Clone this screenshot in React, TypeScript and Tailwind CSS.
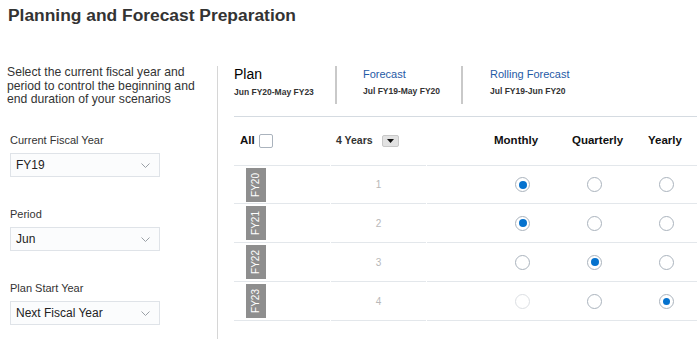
import React from "react";

const Chevron = () => (
  <svg width="9" height="5" viewBox="0 0 9 5" className="shrink-0">
    <polyline points="0.5,0.5 4.5,4.5 8.5,0.5" fill="none" stroke="#9aa0a6" strokeWidth="1" />
  </svg>
);

const Select = ({ value }: { value: string }) => (
  <div className="ml-[10px] w-[150px] h-[24px] flex items-center justify-between pl-[5px] pr-[9px] bg-[#fbfcfd] border border-[#dfe3e8] text-[12px] text-[#222]">
    <span>{value}</span>
    <Chevron />
  </div>
);

const Field = ({ label, value }: { label: string; value: string }) => (
  <div className="flex flex-col">
    <div className="pl-[10px] h-[14px] leading-[14px] text-[11px] text-[#333] mb-[6px]">{label}</div>
    <Select value={value} />
  </div>
);

const Radio = ({ state, dot = 7 }: { state: "on" | "off" | "disabled"; dot?: number }) => (
  <div
    className={
      "w-[15px] h-[15px] rounded-full border flex items-center justify-center bg-white " +
      (state === "disabled" ? "border-[#dcdfe3]" : "border-[#aab3bd]")
    }
  >
    {state === "on" && (
      <div className={dot === 7 ? "w-[8px] h-[8px] rounded-full bg-[#0572ce]" : "w-[7px] h-[7px] rounded-full bg-[#0572ce]"} />
    )}
  </div>
);

type Row = { fy: string; n: string; r: ["on" | "off" | "disabled", "on" | "off" | "disabled", "on" | "off" | "disabled"] };

const rows: Row[] = [
  { fy: "FY20", n: "1", r: ["on", "off", "off"] },
  { fy: "FY21", n: "2", r: ["on", "off", "off"] },
  { fy: "FY22", n: "3", r: ["off", "on", "off"] },
  { fy: "FY23", n: "4", r: ["disabled", "off", "on"] },
];

export default function App() {
  return (
    <div
      className="w-[697px] h-[339px] overflow-hidden bg-white text-[#333]"
      style={{ fontFamily: '"Liberation Sans", Arial, sans-serif' }}
    >
      <div className="h-[66px] pl-[8px] pt-[4px]">
        <h1 className="text-[17.4px] leading-[22px] font-bold text-[#333]">Planning and Forecast Preparation</h1>
      </div>
      <div className="flex h-[273px]">
        {/* Left column */}
        <div className="w-[218px] shrink-0 border-r border-[#d6d6d6] flex flex-col">
          <div className="h-[67px] pl-[7px] pt-[0px] text-[12.2px] leading-[13.5px] text-[#333]">
            Select the current fiscal year and
            <br />
            period to control the beginning and
            <br />
            end duration of your scenarios
          </div>
          <div className="flex flex-col gap-[30px]">
            <Field label="Current Fiscal Year" value="FY19" />
            <Field label="Period" value="Jun" />
            <Field label="Plan Start Year" value="Next Fiscal Year" />
          </div>
        </div>

        {/* Right content */}
        <div className="flex-1 pl-[16px] flex flex-col">
          {/* Tabs */}
          <div className="flex h-[38px]">
            <div className="w-[103px] border-r-2 border-[#c9c9c9] flex flex-col">
              <div className="text-[14px] leading-[16px] text-black">Plan</div>
              <div className="mt-[5px] text-[8.5px] leading-[11px] font-bold text-[#333]">Jun FY20-May FY23</div>
            </div>
            <div className="w-[126px] pl-[26px] border-r-2 border-[#c9c9c9] flex flex-col">
              <div className="text-[11px] leading-[16px] text-[#1f5aa6]">Forecast</div>
              <div className="mt-[4px] text-[8.5px] leading-[11px] font-bold text-[#333]">Jul FY19-May FY20</div>
            </div>
            <div className="pl-[27px] flex flex-col">
              <div className="text-[11px] leading-[16px] text-[#1f5aa6]">Rolling Forecast</div>
              <div className="mt-[4px] text-[8.5px] leading-[11px] font-bold text-[#333]">Jul FY19-Jun FY20</div>
            </div>
          </div>
          <div className="mt-[12px] h-[1px] bg-[#d5dbe1]" />

          {/* Header row */}
          <div className="h-[48px] flex items-center text-[#111]">
            <div className="w-[102px] pl-[6px] flex items-center">
              <span className="text-[11.5px] font-bold">All</span>
              <span className="ml-[4px] w-[14px] h-[14px] border border-[#aab3bd] rounded-[2px] bg-white" />
            </div>
            <div className="w-[158px] flex items-center">
              <span className="text-[10.5px] font-bold text-[#333]">4 Years</span>
              <span className="ml-[9px] w-[17px] h-[12px] bg-[#e2e2e2] border border-[#c8c8c8] rounded-[2px] flex items-center justify-center">
                <svg width="7" height="4" viewBox="0 0 7 4">
                  <polygon points="0,0 7,0 3.5,4" fill="#111" />
                </svg>
              </span>
            </div>
            <div className="w-[78px] text-[11.5px] font-bold">Monthly</div>
            <div className="w-[76px] text-[11.5px] font-bold">Quarterly</div>
            <div className="text-[11.5px] font-bold">Yearly</div>
          </div>

          {/* Table */}
          <div className="flex flex-col">
            {rows.map((row, i) => (
              <div key={row.fy} className="grid grid-cols-[96px_95px_1fr] gap-x-[1px]">
                <div className={"h-[39px] border-b border-[#e3e7eb] pl-[12px] flex items-center " + (i === 0 ? "border-t" : "")}>
                  <div className="w-[20px] h-[34px] bg-[#8e8e8e] flex items-center justify-center">
                    <span className="-rotate-90 text-white text-[10px] leading-none whitespace-nowrap">{row.fy}</span>
                  </div>
                </div>
                <div className={"h-[39px] border-b border-[#e3e7eb] flex items-center justify-center text-[10px] text-[#b8b8b8] " + (i === 0 ? "border-t" : "")}>
                  {row.n}
                </div>
                <div className={"h-[39px] border-b border-[#e3e7eb] flex items-center " + (i === 0 ? "border-t" : "")}>
                  <div className="ml-[88px]">
                    <Radio state={row.r[0]} />
                  </div>
                  <div className="ml-[57px]">
                    <Radio state={row.r[1]} />
                  </div>
                  <div className="ml-[57px]">
                    <Radio state={row.r[2]} dot={i === 3 ? 6 : 7} />
                  </div>
                </div>
              </div>
            ))}
          </div>
        </div>
      </div>
    </div>
  );
}
